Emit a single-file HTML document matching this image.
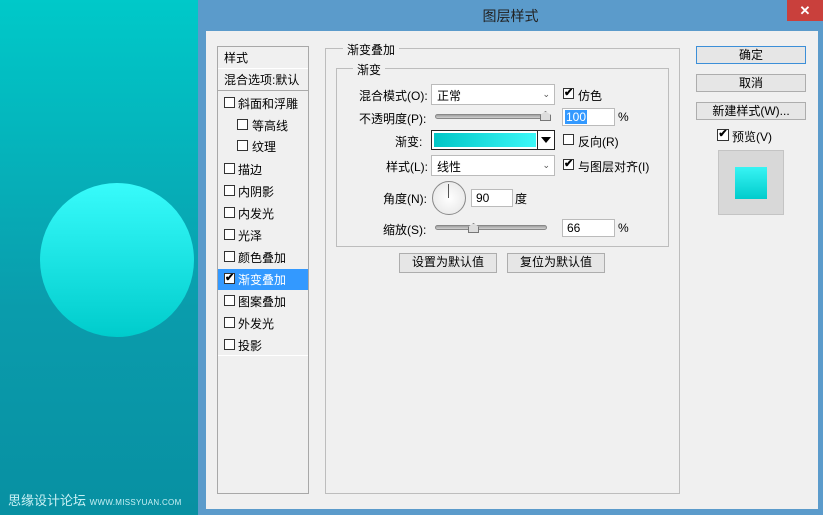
<!DOCTYPE html>
<html><head><meta charset="utf-8"><style>
*{margin:0;padding:0;box-sizing:border-box}
body{width:823px;height:515px;overflow:hidden;position:relative;font-family:"Liberation Sans","Microsoft YaHei","Noto Sans CJK SC",sans-serif;font-size:12px;color:#000;background:#5b9bcb}
.a{position:absolute}
#bg{left:0;top:0;width:198px;height:515px;background:linear-gradient(#00c9c9,#0a9cac 60%,#0890a2)}
#circ{left:40px;top:183px;width:154px;height:154px;border-radius:50%;background:linear-gradient(#38fbfb,#00cccc)}
#tb{left:198px;top:0;width:625px;height:31px;background:#5b9bcb}
#close{left:787px;top:0;width:36px;height:21px;background:#c9403c;color:#fff;text-align:center;line-height:21px;font-size:13px;font-weight:bold}
#body{left:206px;top:31px;width:612px;height:478px;background:#f0f0f0}
.list{left:217px;top:46px;width:92px;height:448px;background:#f0f0f0;border:1px solid #a8a8a8}
.row{position:absolute;left:0;width:90px;height:22px;line-height:22px;border-bottom:1px solid #fff}
.cb{position:absolute;width:11px;height:11px;border:1px solid #333;background:#fff}
.fs{border:1px solid #bdbdbd}
.lg{background:#f0f0f0;padding:0 4px}
.in{background:#fff;border:1px solid #bbb}
.btn{background:#e6e6e6;border:1px solid #adadad;text-align:center;line-height:17px}
.sl{height:5px;border-radius:3px;background:linear-gradient(#a0a0a0,#d0d0d0);border:1px solid #888}
.ck{font-size:11px;line-height:9px;text-align:center;font-weight:bold}
.dd{position:absolute;right:4px;top:0;color:#555;font-size:9px}
</style></head><body>
<div class="a" id="bg"></div>
<div class="a" id="circ"></div>
<div class="a" style="left:8px;top:490px;color:#c8f0f4;font-size:13px">思缘设计论坛 <span style="font-size:8px;letter-spacing:0.3px">WWW.MISSYUAN.COM</span></div>
<div class="a" id="tb"></div>
<div class="a" style="left:198px;top:6px;width:625px;text-align:center;font-size:14px;color:#222">图层样式</div>
<div class="a" id="close">✕</div>
<div class="a" id="body"></div>

<div class="a list">
<div class="row" style="top:0;padding-left:6px">样式</div>
<div class="row" style="top:22px;padding-left:6px;border-bottom:1px solid #aaa">混合选项:默认</div>
</div>
<div class="a" style="left:218px;top:269px;width:90px;height:21px;background:#3399ff"></div>
<div class="a" style="left:218px;top:0;width:90px;font-size:12px" id="items"></div>

<!-- list items -->
<div class="a cb" style="left:224px;top:97px"></div><div class="a" style="left:238px;top:95px">斜面和浮雕</div>
<div class="a cb" style="left:237px;top:119px"></div><div class="a" style="left:252px;top:117px">等高线</div>
<div class="a cb" style="left:237px;top:140px"></div><div class="a" style="left:252px;top:138px">纹理</div>
<div class="a cb" style="left:224px;top:163px"></div><div class="a" style="left:238px;top:161px">描边</div>
<div class="a cb" style="left:224px;top:185px"></div><div class="a" style="left:238px;top:183px">内阴影</div>
<div class="a cb" style="left:224px;top:207px"></div><div class="a" style="left:238px;top:205px">内发光</div>
<div class="a cb" style="left:224px;top:229px"></div><div class="a" style="left:238px;top:227px">光泽</div>
<div class="a cb" style="left:224px;top:251px"></div><div class="a" style="left:238px;top:249px">颜色叠加</div>
<div class="a cb ck" style="left:224px;top:273px">✔</div><div class="a" style="left:238px;top:271px;color:#fff">渐变叠加</div>
<div class="a cb" style="left:224px;top:295px"></div><div class="a" style="left:238px;top:293px">图案叠加</div>
<div class="a cb" style="left:224px;top:317px"></div><div class="a" style="left:238px;top:315px">外发光</div>
<div class="a cb" style="left:224px;top:339px"></div><div class="a" style="left:238px;top:337px">投影</div>
<div class="a" style="left:218px;top:355px;width:90px;height:1px;background:#fff"></div>

<!-- fieldsets -->
<div class="a fs" style="left:325px;top:48px;width:355px;height:446px"></div>
<div class="a lg" style="left:343px;top:41px">渐变叠加</div>
<div class="a fs" style="left:336px;top:68px;width:333px;height:179px"></div>
<div class="a lg" style="left:353px;top:61px">渐变</div>

<div class="a" style="left:359px;top:87px">混合模式(O):</div>
<div class="a in" style="left:431px;top:84px;width:124px;height:21px;padding:2px 5px">正常<span class="dd" style="top:4px">⌄</span></div>
<div class="a cb ck" style="left:563px;top:88px">✔</div><div class="a" style="left:578px;top:87px">仿色</div>

<div class="a" style="left:359px;top:110px">不透明度(P):</div>
<div class="a sl" style="left:435px;top:114px;width:116px"></div>
<div class="a" style="left:540px;top:111px;width:11px;height:10px;background:#ddd;border:1px solid #777;clip-path:polygon(50% 0,100% 40%,100% 100%,0 100%,0 40%)"></div>
<div class="a in" style="left:562px;top:108px;width:53px;height:18px"></div>
<div class="a" style="left:565px;top:110px;background:#3399ff;color:#fff;line-height:14px;padding:0 1px">100</div>
<div class="a" style="left:618px;top:110px">%</div>

<div class="a" style="left:395px;top:133px">渐变:</div>
<div class="a" style="left:431px;top:130px;width:124px;height:20px;border:1px solid #222;background:#fff"></div>
<div class="a" style="left:434px;top:133px;width:102px;height:14px;background:linear-gradient(90deg,#00c6c6,#3cf8f8)"></div>
<div class="a" style="left:537px;top:131px;width:1px;height:18px;background:#222"></div>
<div class="a" style="left:541px;top:137px;width:0;height:0;border-left:5px solid transparent;border-right:5px solid transparent;border-top:6px solid #000"></div>
<div class="a cb" style="left:563px;top:134px"></div><div class="a" style="left:578px;top:133px">反向(R)</div>

<div class="a" style="left:386px;top:158px">样式(L):</div>
<div class="a in" style="left:431px;top:155px;width:124px;height:21px;padding:2px 5px">线性<span class="dd" style="top:4px">⌄</span></div>
<div class="a cb ck" style="left:563px;top:159px">✔</div><div class="a" style="left:578px;top:158px">与图层对齐(I)</div>

<div class="a" style="left:383px;top:190px">角度(N):</div>
<div class="a" style="left:432px;top:181px;width:34px;height:34px;border-radius:50%;border:1px solid #888;background:radial-gradient(#fff,#e4e4e4)"></div>
<div class="a" style="left:448px;top:184px;width:1px;height:14px;background:#555"></div>
<div class="a in" style="left:471px;top:189px;width:42px;height:18px;padding:1px 4px">90</div>
<div class="a" style="left:515px;top:190px">度</div>

<div class="a" style="left:383px;top:221px">缩放(S):</div>
<div class="a sl" style="left:435px;top:225px;width:112px"></div>
<div class="a" style="left:468px;top:223px;width:11px;height:10px;background:#ddd;border:1px solid #777;clip-path:polygon(50% 0,100% 40%,100% 100%,0 100%,0 40%)"></div>
<div class="a in" style="left:562px;top:219px;width:53px;height:18px;padding:1px 4px">66</div>
<div class="a" style="left:618px;top:221px">%</div>

<div class="a btn" style="left:399px;top:253px;width:98px;height:20px">设置为默认值</div>
<div class="a btn" style="left:507px;top:253px;width:98px;height:20px">复位为默认值</div>

<div class="a btn" style="left:696px;top:46px;width:110px;height:18px;border-color:#3c8fd8">确定</div>
<div class="a btn" style="left:696px;top:74px;width:110px;height:18px">取消</div>
<div class="a btn" style="left:696px;top:102px;width:110px;height:18px">新建样式(W)...</div>
<div class="a cb ck" style="left:717px;top:129px;width:12px;height:12px">✔</div><div class="a" style="left:732px;top:128px">预览(V)</div>
<div class="a" style="left:718px;top:150px;width:66px;height:65px;background:#d8d8d8;border:1px solid #c4c4c4"></div>
<div class="a" style="left:735px;top:167px;width:32px;height:32px;background:linear-gradient(#38f4f4,#00cccc)"></div>
</body></html>
